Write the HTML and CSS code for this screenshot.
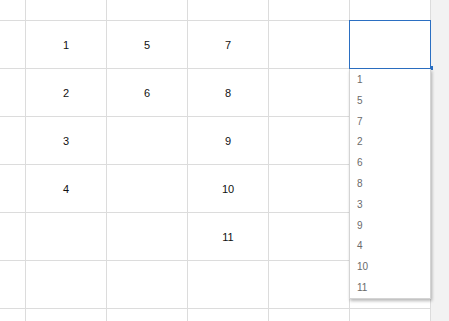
FILE: index.html
```html
<!DOCTYPE html>
<html>
<head>
<meta charset="utf-8">
<link rel="stylesheet" href="styles.css">
</head>
<body>
<div class="sheet">
  <div class="grid">
    <div class="c hdr"></div><div class="c hdr"></div><div class="c hdr"></div><div class="c hdr"></div><div class="c hdr"></div><div class="c hdr"></div>
    <div class="c"></div><div class="c">1</div><div class="c">5</div><div class="c">7</div><div class="c"></div><div class="c"></div>
    <div class="c"></div><div class="c">2</div><div class="c">6</div><div class="c">8</div><div class="c"></div><div class="c"></div>
    <div class="c"></div><div class="c">3</div><div class="c"></div><div class="c">9</div><div class="c"></div><div class="c"></div>
    <div class="c"></div><div class="c">4</div><div class="c"></div><div class="c">10</div><div class="c"></div><div class="c"></div>
    <div class="c"></div><div class="c"></div><div class="c"></div><div class="c">11</div><div class="c"></div><div class="c"></div>
    <div class="c"></div><div class="c"></div><div class="c"></div><div class="c"></div><div class="c"></div><div class="c"></div>
    <div class="c"></div><div class="c"></div><div class="c"></div><div class="c"></div><div class="c"></div><div class="c"></div>
  </div>
  <div class="selection"></div>
  <div class="handle"></div>
  <ul class="dropdown">
    <li>1</li><li>5</li><li>7</li><li>2</li><li>6</li><li>8</li><li>3</li><li>9</li><li>4</li><li>10</li><li>11</li>
  </ul>
</div>
</body>
</html>
```
FILE: styles.css
```css
html, body {
  margin: 0;
  padding: 0;
  background: #f2f2f2;
  overflow: hidden;
}
.sheet {
  position: relative;
  width: 449px;
  height: 321px;
  overflow: hidden;
}
.grid {
  display: grid;
  grid-template-columns: 25px repeat(5, 80px);
  grid-template-rows: 20px repeat(7, 47px);
  gap: 1px;
  background: #dcdcdc;
  width: 431px;
}
.c {
  background: #fff;
  display: flex;
  align-items: center;
  justify-content: center;
  font-family: "Liberation Sans", Arial, sans-serif;
  font-size: 11px;
  color: #111;
}
.selection {
  position: absolute;
  left: 349px;
  top: 20px;
  width: 80px;
  height: 47px;
  border: 1px solid #2b6fc2;
}
.handle {
  position: absolute;
  left: 430px;
  top: 66px;
  width: 3px;
  height: 4px;
  background: #2b6fc2;
}
.dropdown {
  position: absolute;
  left: 349px;
  top: 69px;
  width: 80px;
  height: 229px;
  margin: 0;
  padding: 0;
  list-style: none;
  background: #fff;
  border: 1px solid #d4d4d4;
  border-top: 0;
  box-shadow: 1px 2px 3px rgba(0,0,0,0.28);
}
.dropdown li {
  height: 20.8px;
  line-height: 21.6px;
  padding-left: 7px;
  font-family: "Liberation Sans", Arial, sans-serif;
  font-size: 10px;
  color: #6a6a6a;
}
```
